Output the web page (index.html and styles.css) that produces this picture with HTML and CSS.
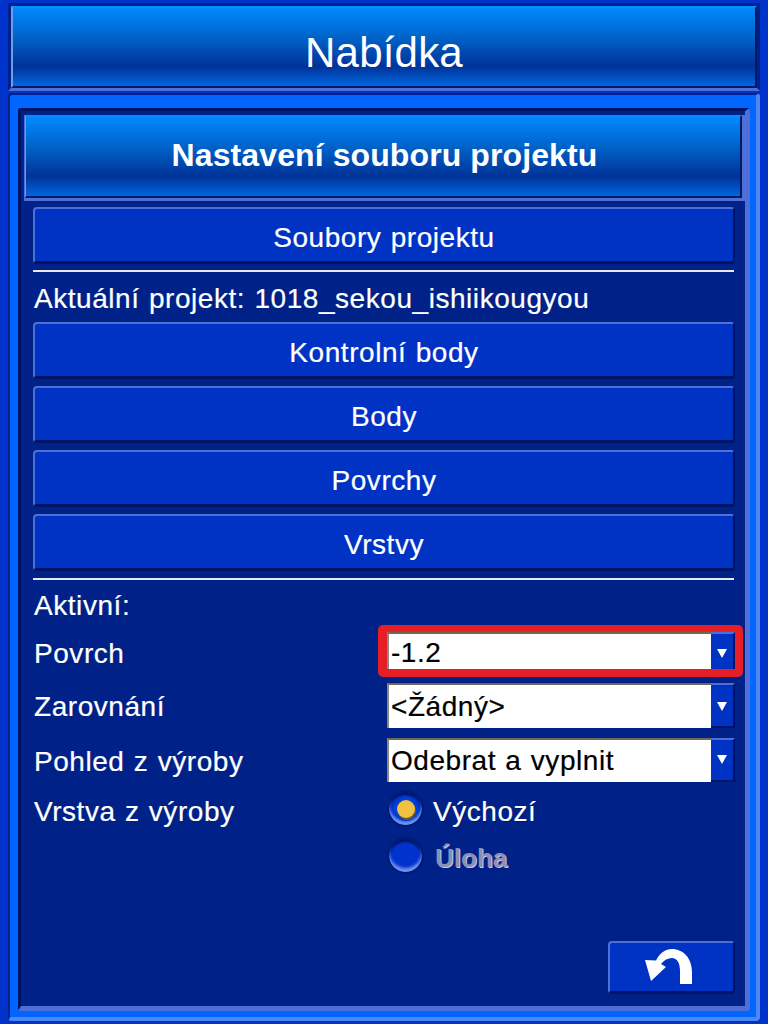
FILE: index.html
```html
<!DOCTYPE html>
<html lang="cs">
<head>
  <meta charset="UTF-8" />
  <title>Nabídka</title>
  <link rel="stylesheet" href="styles.css">
</head>
<body>

<div class="topbar"><div class="topbar-inner">Nabídka</div></div>

<div class="panel">
  <div class="inner">
    <div class="subbar"><div class="subbar-inner">Nastavení souboru projektu</div></div>

    <div class="content">
      <button class="btn">Soubory projektu</button>
      <hr class="line">
      <p class="current">Aktuální projekt: 1018_sekou_ishiikougyou</p>
      <div class="btn-list">
        <button class="btn">Kontrolní body</button>
        <button class="btn">Body</button>
        <button class="btn">Povrchy</button>
        <button class="btn">Vrstvy</button>
      </div>
      <hr class="line line-second">
      <p class="active-title">Aktivní:</p>

      <div class="row row-surface">
        <span class="label">Povrch</span>
        <div class="select">
          <span class="select-value">-1.2</span>
          <span class="select-arrow"></span>
          <span class="highlight"></span>
        </div>
      </div>
      <div class="row row-align">
        <span class="label">Zarovnání</span>
        <div class="select">
          <span class="select-value">&lt;Žádný&gt;</span>
          <span class="select-arrow"></span>
        </div>
      </div>
      <div class="row row-view">
        <span class="label">Pohled z výroby</span>
        <div class="select">
          <span class="select-value">Odebrat a vyplnit</span>
          <span class="select-arrow"></span>
        </div>
      </div>
      <div class="row row-layer">
        <span class="label">Vrstva z výroby</span>
        <div class="radios">
          <div class="radio-row">
            <span class="radio"><span class="radio-dot"></span></span>
            <span class="radio-text">Výchozí</span>
          </div>
          <div class="radio-row">
            <span class="radio"></span>
            <span class="radio-text disabled">Úloha</span>
          </div>
        </div>
      </div>

      <div class="footer">
        <button class="btn btn-back">
          <svg width="48" height="35" viewBox="0 0 48 35">
            <path d="M47 35 V23 C47 9 38 0 27 0 C20 0 15 4 11 11.5 L0 11 L6 32 L21 18 L16 15 C19 11 23 9 27 9 C32 9 35 14 35 22 V35 Z" fill="#fff"/>
          </svg>
        </button>
      </div>
    </div>
  </div>
</div>

</body>
</html>
```

FILE: styles.css
```css
* {
  box-sizing: border-box;
}
html, body {
  margin: 0;
  height: 1024px;
  overflow: hidden;
}
body {
  background: #0033cc;
  padding: 3px 8px 0 8px;
  font-family: "Liberation Sans", Arial, sans-serif;
  color: white;
}
.topbar {
  height: 88px;
  border-top: 3px solid #002288;
  border-left: 3px solid #002288;
  border-right: 3px solid #002288;
  border-bottom: 3px solid #4f6fd8;
}
.topbar-inner {
  height: 82px;
  padding-top: 5px;
  text-align: center;
  font-size: 42px;
  letter-spacing: 0.2px;
  line-height: 80px;
  border-top: 2px solid #0a8cff;
  border-left: 2px solid #6f9be8;
  border-right: 2px solid #001a66;
  border-bottom: 2px solid #001a66;
  background: linear-gradient(#0088ff, #0066cc 35%, #003399 75%, #0066e0);
}
.panel {
  margin-top: 2px;
  height: 928px;
  background: #0066ff;
  padding: 13px 6px 6px 8px;
  border-radius: 4px;
  border-top: 2px solid #002288;
  border-left: 2px solid #002288;
  border-right: 4px solid #4f86f0;
  border-bottom: 4px solid #4f86f0;
}
.inner {
  height: 100%;
  background: #002288;
  border-top: 3px solid #001466;
  border-left: 3px solid #001466;
  border-right: 5px solid #4f6fd8;
  border-bottom: 5px solid #4f6fd8;
  padding: 4px 0 0 3px;
  border-radius: 3px;
}
.subbar {
  height: 86px;
  border-right: 3px solid #4f6fd8;
  border-bottom: 3px solid #4f6fd8;
  border-left: 1px solid #4f6fd8;
}
.subbar-inner {
  height: 83px;
  padding-left: 3px;
  text-align: center;
  font-size: 32px;
  letter-spacing: 0.1px;
  line-height: 76px;
  font-weight: bold;
  border-top: 2px solid #0a8cff;
  border-left: 1px solid #6f9be8;
  border-right: 2px solid #001a66;
  border-bottom: 2px solid #001a66;
  background: linear-gradient(#0088ff, #0066cc 35%, #003399 75%, #0066e0);
}
.content {
  padding: 6px 10px 0 9px;
}
.btn {
  display: block;
  width: 100%;
  height: 57px;
  padding: 5px 0 0 0;
  background: #0033c4;
  color: white;
  font-family: inherit;
  font-size: 28px;
  letter-spacing: 0.55px;
  word-spacing: 1px;
  -webkit-text-stroke: 0.2px white;
  border: none;
  border-top: 2px solid #4f6fd8;
  border-left: 2px solid #4f6fd8;
  border-right: 2px solid #001466;
  border-bottom: 3px solid #001466;
  border-radius: 4px;
}
.line {
  border: none;
  height: 2px;
  background: #e8e8e8;
  margin: 6px 1px 0 0;
}
.line-second {
  margin-top: 7px;
}
.current, .active-title, .label, .select-value, .radio-text {
  font-size: 28px;
  letter-spacing: 0.55px;
  word-spacing: 1px;
  -webkit-text-stroke: 0.2px;
}
.current, .active-title, .label {
  padding-left: 1px;
}
.current {
  margin: 0;
  line-height: 30px;
  padding-top: 12px;
  height: 50px;
}
.btn-list {
  display: flex;
  flex-direction: column;
  gap: 7px;
}
.active-title {
  margin: 0;
  line-height: 30px;
  padding-top: 11px;
  height: 52px;
}
.row {
  display: flex;
  justify-content: space-between;
}
.label {
  line-height: 30px;
  padding-top: 7px;
}
.row-align .label, .row-view .label {
  padding-top: 9px;
}
.row-surface {
  margin-bottom: 8px;
}
.row-align {
  margin-bottom: 10px;
}
.row-view {
  margin-bottom: 8px;
}
.select {
  position: relative;
  width: 348px;
  height: 43px;
  display: flex;
  background: white;
  border-top: 2px solid #6b6b55;
  border-left: 2px solid #8a8a80;
}
.row-align .select {
  height: 45px;
}
.row-view .select {
  height: 44px;
}
.select-value {
  flex: 1;
  color: black;
  line-height: 38px;
  padding-left: 2px;
}
.row-align .select-value {
  line-height: 44px;
}
.row-view .select-value {
  line-height: 42px;
}
.select-arrow {
  width: 24px;
  margin-top: -2px;
  background: #0033c4;
  border-top: 2px solid #4f6fd8;
  border-right: 2px solid #001466;
  border-bottom: 2px solid #001466;
  position: relative;
}
.select-arrow::after {
  content: "";
  position: absolute;
  left: 6px;
  top: 15px;
  border-left: 5px solid transparent;
  border-right: 5px solid transparent;
  border-top: 9px solid white;
}
.row-align .select-arrow::after {
  top: 17px;
}
.highlight {
  position: absolute;
  top: -9px;
  left: -11px;
  right: -8px;
  bottom: -2px;
  border: 7px solid #e61e25;
  border-left-width: 9px;
  border-right-width: 8px;
  border-bottom-width: 8px;
  border-radius: 5px;
}
.radios {
  width: 348px;
  display: flex;
  flex-direction: column;
  gap: 10px;
}
.radio-row {
  display: flex;
  height: 37px;
}
.radio {
  width: 37px;
  height: 37px;
  border-radius: 50%;
  display: flex;
  align-items: center;
  justify-content: center;
  background: #0033cc;
  border: 2px solid #001a77;
  box-shadow: inset 0 -4px 3px #6f94ee, inset 0 3px 2px #001466;
}
.radio-dot {
  width: 18px;
  height: 18px;
  border-radius: 50%;
  background: #f0c040;
  box-shadow: 1px 2px 0 #6b5a30, 0 0 0 3px #0040d0;
}
.radio-text {
  line-height: 30px;
  padding: 7px 0 0 9px;
  text-shadow: 1px 1px 0 #001466;
}
.radio-text.disabled {
  font-weight: bold;
  font-size: 26px;
  letter-spacing: 0;
  padding-left: 11px;
  padding-top: 6px;
  color: #8890b8;
  -webkit-text-stroke: 0;
  text-shadow: 1px 1px 0 #c8c8d8;
}
.footer {
  display: flex;
  justify-content: flex-end;
  margin-top: 67px;
}
.btn-back {
  width: 127px;
  height: 53px;
  display: flex;
  align-items: center;
  justify-content: center;
  padding: 0 5px 2px 0;
}
```
